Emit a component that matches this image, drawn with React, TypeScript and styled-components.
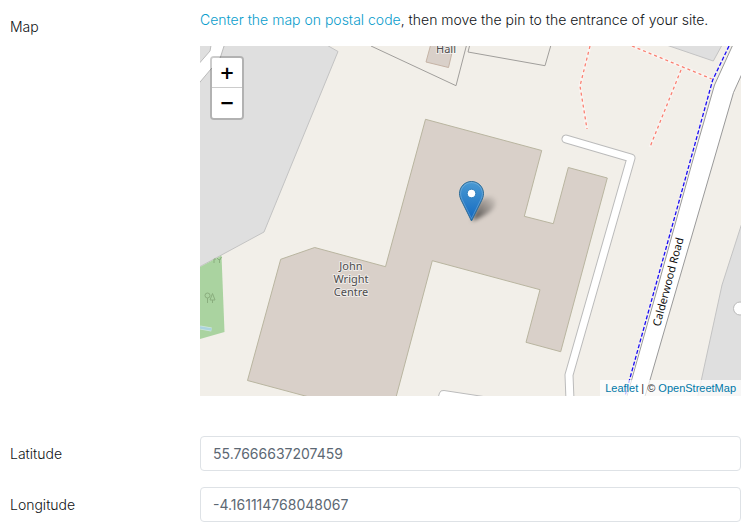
import React from 'react';
import styled, { createGlobalStyle } from 'styled-components';

const GlobalStyle = createGlobalStyle`
  *, *::before, *::after {
    box-sizing: border-box;
  }

  body {
    margin: 0;
    background: #fff;
    color: #101316;
    font-family: Inter, "Liberation Sans", sans-serif;
    font-size: 14px;
    font-weight: 300;
    line-height: 20px;
  }
`;

const Form = styled.form`
  display: flex;
  flex-direction: column;
  gap: 16px;
  padding: 10px;
`;

const Field = styled.div<{ $spaced?: boolean }>`
  display: grid;
  grid-template-columns: 190px minmax(0, 1fr);
  align-items: start;
  margin-bottom: ${({ $spaced }) => ($spaced ? '24px' : '0')};
`;

const Label = styled.label`
  padding-top: 8px;
`;

const MapLabel = styled.div`
  padding-top: 7px;
`;

const Hint = styled.p`
  margin: 0 0 16px;
`;

const HintLink = styled.a`
  color: #0a9dcc;
  text-decoration: none;
`;

const TextInput = styled.input`
  width: 100%;
  height: 35px;
  padding: 0 12px;
  border: 1px solid #dee2e6;
  border-radius: 4px;
  background: #fff;
  color: #5c6873;
  font: inherit;
  font-weight: 400;
`;

const MapFrame = styled.div`
  position: relative;
  height: 350px;
  overflow: hidden;
  background: #f2efe9;
`;

const MapDrawing = styled.svg`
  display: block;
  width: 100%;
  height: 100%;
`;

const ZoomControl = styled.div`
  position: absolute;
  top: 10px;
  left: 10px;
  display: flex;
  flex-direction: column;
  border: 2px solid rgba(0, 0, 0, 0.2);
  border-radius: 4px;
  background-clip: padding-box;
`;

const ZoomButton = styled.button`
  width: 30px;
  height: 30px;
  padding: 0;
  border: 0;
  background: #fff;
  color: #000;
  font: bold 18px/30px "DejaVu Sans", sans-serif;
  text-align: center;
  cursor: pointer;

  &:first-child {
    border-bottom: 1px solid #ccc;
    border-radius: 2px 2px 0 0;
  }

  &:last-child {
    border-radius: 0 0 2px 2px;
  }
`;

const Pin = styled.svg`
  position: absolute;
  top: 50%;
  left: 50%;
  width: 41px;
  height: 41px;
  margin: -40px 0 0 -12px;
  overflow: visible;
`;

const Attribution = styled.div`
  position: absolute;
  right: 0;
  bottom: 0;
  padding: 0 5px;
  background: rgba(255, 255, 255, 0.7);
  color: #333;
  font: 11px/16px "Liberation Sans", Arial, sans-serif;

  a {
    color: #0078a8;
    text-decoration: none;
  }
`;

const PlaceName = styled.text`
  fill: #4d4d4d;
  stroke: rgba(255, 255, 255, 0.6);
  stroke-width: 2px;
  stroke-linejoin: round;
  paint-order: stroke;
  font: 11px "Noto Sans", sans-serif;
  text-anchor: middle;
`;

const RoadName = styled.text`
  fill: #111;
  font: 11px "Noto Sans", sans-serif;
`;

const SERVICE_ROAD = 'M566 139L631 158L569 375L570 400';
const CYCLEWAY = 'M729 46L712.7 80L688 169L655 288L630 378L625 396';

function StreetMap() {
  return (
    <MapDrawing viewBox="200 46 541 350" preserveAspectRatio="xMidYMid slice" role="img" aria-label="Street map">
      <g fill="#dfdfdf" stroke="#c3c3c3" strokeWidth="1">
        <path d="M190 36L311 36L338 51.5L291 166L264 232L190 272Z" />
        <path d="M640 36L713.3 61L727 36Z" />
        <path d="M751 197L741 226L722 285L697 400L751 400Z" />
      </g>
      <path d="M190 74L200 62.5L210 51L212 40H226L220.5 57Q218 63 211 69L190 94Z" fill="#fff" stroke="#bbb" />
      <path d="M200 267L221.5 255.5L224.5 332L200 339Z" fill="#aad3a0" />
      <g fill="none" stroke="#8aae7e" strokeWidth="1">
        <circle cx="207.5" cy="295.5" r="2.5" />
        <path d="M207.5 298V303M212.5 293.5L210 300H215ZM212.5 300V303" />
        <path d="M214 263V259H216M219.5 263V259M217 258L219.5 260.5L221.5 257" />
      </g>
      <path d="M200 327.5L211.5 329.5" stroke="#cfe6dc" strokeWidth="4" />
      <path d="M200 327.5L211.5 329.5" stroke="#aad3df" strokeWidth="2.5" />

      <g fill="none" stroke="#a09e9b" strokeWidth="1">
        <path d="M371 46L456 85.7L466.3 46" />
        <path d="M469.5 46L468 52L545 65.7L550.7 46" />
      </g>

      <path d="M432 40L426 62L448.5 67.5L455 40Z" fill="#d9d0c9" stroke="#c5b3a5" />
      <path
        d="M425.5 119.3L541.7 150.5L524.3 216.3L553.3 223.7L568.3 167.5L607.3 178L560.7 351.7L526 342.3L540 289.7L432.3 260.7L395 401H324L247.5 380.5L280.7 259.3L314.7 247.5L385.5 266.7Z"
        fill="#d9d0c9"
        stroke="#b9b5a0"
      />

      <g fill="none" stroke="#faf5f2" strokeWidth="3">
        <path d="M590 46L580 86L587 129M632 46L713 79.5M681 70L650 147" />
      </g>
      <g fill="none" stroke="#fa8072" strokeWidth="1.3" strokeDasharray="3 3">
        <path d="M590 46L580 86L587 129" />
        <path d="M632 46L713 79.5" />
        <path d="M681 70L650 147" />
      </g>

      <g fill="none" strokeLinecap="round" strokeLinejoin="round">
        <path d={SERVICE_ROAD} stroke="#bbb" strokeWidth="9" />
        <path d={SERVICE_ROAD} stroke="#fff" strokeWidth="7" />
      </g>
      <path d="M438 398L439.5 393Q440.5 390 444 390.5L490 397.5" fill="#fff" stroke="#bbb" />
      <circle cx="740" cy="308.5" r="6.5" fill="#fff" stroke="#bbb" />

      <path
        d="M737 36L732.3 46L714.5 85L692 163L657.5 288L631 382L624 406H642L650 380L679 280L711 170L733.5 92.5L746 65V36Z"
        fill="#fff"
        stroke="#999"
      />
      <path d={CYCLEWAY} fill="none" stroke="#f4f1f0" strokeWidth="3" />
      <path d={CYCLEWAY} fill="none" stroke="#1a0cf5" strokeWidth="1.3" strokeDasharray="4 2" />

      <RoadName transform="translate(660 327) rotate(-75)">Calderwood Road</RoadName>
      <PlaceName x="446" y="53">Hall</PlaceName>
      <PlaceName x="351" y="270">John</PlaceName>
      <PlaceName x="351" y="283">Wright</PlaceName>
      <PlaceName x="351" y="296">Centre</PlaceName>
    </MapDrawing>
  );
}

function MapPin() {
  return (
    <Pin viewBox="0 0 41 41" role="img" aria-label="Site entrance">
      <defs>
        <linearGradient id="pinFill" x1="0" y1="0" x2="0" y2="1">
          <stop offset="0" stopColor="#4a9ad3" />
          <stop offset="1" stopColor="#1268c0" />
        </linearGradient>
        <linearGradient id="pinShadow" gradientUnits="userSpaceOnUse" x1="13" y1="40" x2="37" y2="18">
          <stop offset="0" stopColor="#000" stopOpacity="0.7" />
          <stop offset="0.5" stopColor="#000" stopOpacity="0.35" />
          <stop offset="1" stopColor="#000" stopOpacity="0.04" />
        </linearGradient>
        <filter id="pinBlur" x="-50%" y="-50%" width="200%" height="200%">
          <feGaussianBlur stdDeviation="2" />
        </filter>
      </defs>
      <path d="M13 40L19 23Q24 14 34 16Q40 20 34 28Q28 34 13 40Z" fill="url(#pinShadow)" filter="url(#pinBlur)" />
      <path
        d="M12.5 0.5C5.9 0.5 0.5 5.9 0.5 12.6C0.5 15.1 1.5 17.7 2.3 19.4L12.5 40L22.7 19.4C23.5 17.7 24.5 15.1 24.5 12.6C24.5 5.9 19.1 0.5 12.5 0.5Z"
        fill="url(#pinFill)"
        stroke="#2e6c97"
      />
      <path
        d="M12.5 1.6C6.5 1.6 1.6 6.5 1.6 12.6C1.6 14.9 2.5 17.3 3.3 18.9L12.5 37.5L21.7 18.9C22.5 17.3 23.4 14.9 23.4 12.6C23.4 6.5 18.5 1.6 12.5 1.6Z"
        fill="none"
        stroke="#fff"
        strokeOpacity="0.2"
      />
      <circle cx="12.5" cy="12.5" r="4.3" fill="#fff" stroke="#2e7ebd" />
    </Pin>
  );
}

export default function App() {
  return (
    <>
      <GlobalStyle />
      <Form>
        <Field $spaced>
          <MapLabel>Map</MapLabel>
          <div>
            <Hint>
              <HintLink href="#map">Center the map on postal code</HintLink>, then move the pin to the entrance of your site.
            </Hint>
            <MapFrame id="map">
              <StreetMap />
              <MapPin />
              <ZoomControl>
                <ZoomButton type="button" aria-label="Zoom in">+</ZoomButton>
                <ZoomButton type="button" aria-label="Zoom out">−</ZoomButton>
              </ZoomControl>
              <Attribution>
                <a href="#leaflet">Leaflet</a> | © <a href="#openstreetmap">OpenStreetMap</a>
              </Attribution>
            </MapFrame>
          </div>
        </Field>
        <Field>
          <Label htmlFor="latitude">Latitude</Label>
          <TextInput id="latitude" defaultValue="55.7666637207459" />
        </Field>
        <Field>
          <Label htmlFor="longitude">Longitude</Label>
          <TextInput id="longitude" defaultValue="-4.161114768048067" />
        </Field>
      </Form>
    </>
  );
}
